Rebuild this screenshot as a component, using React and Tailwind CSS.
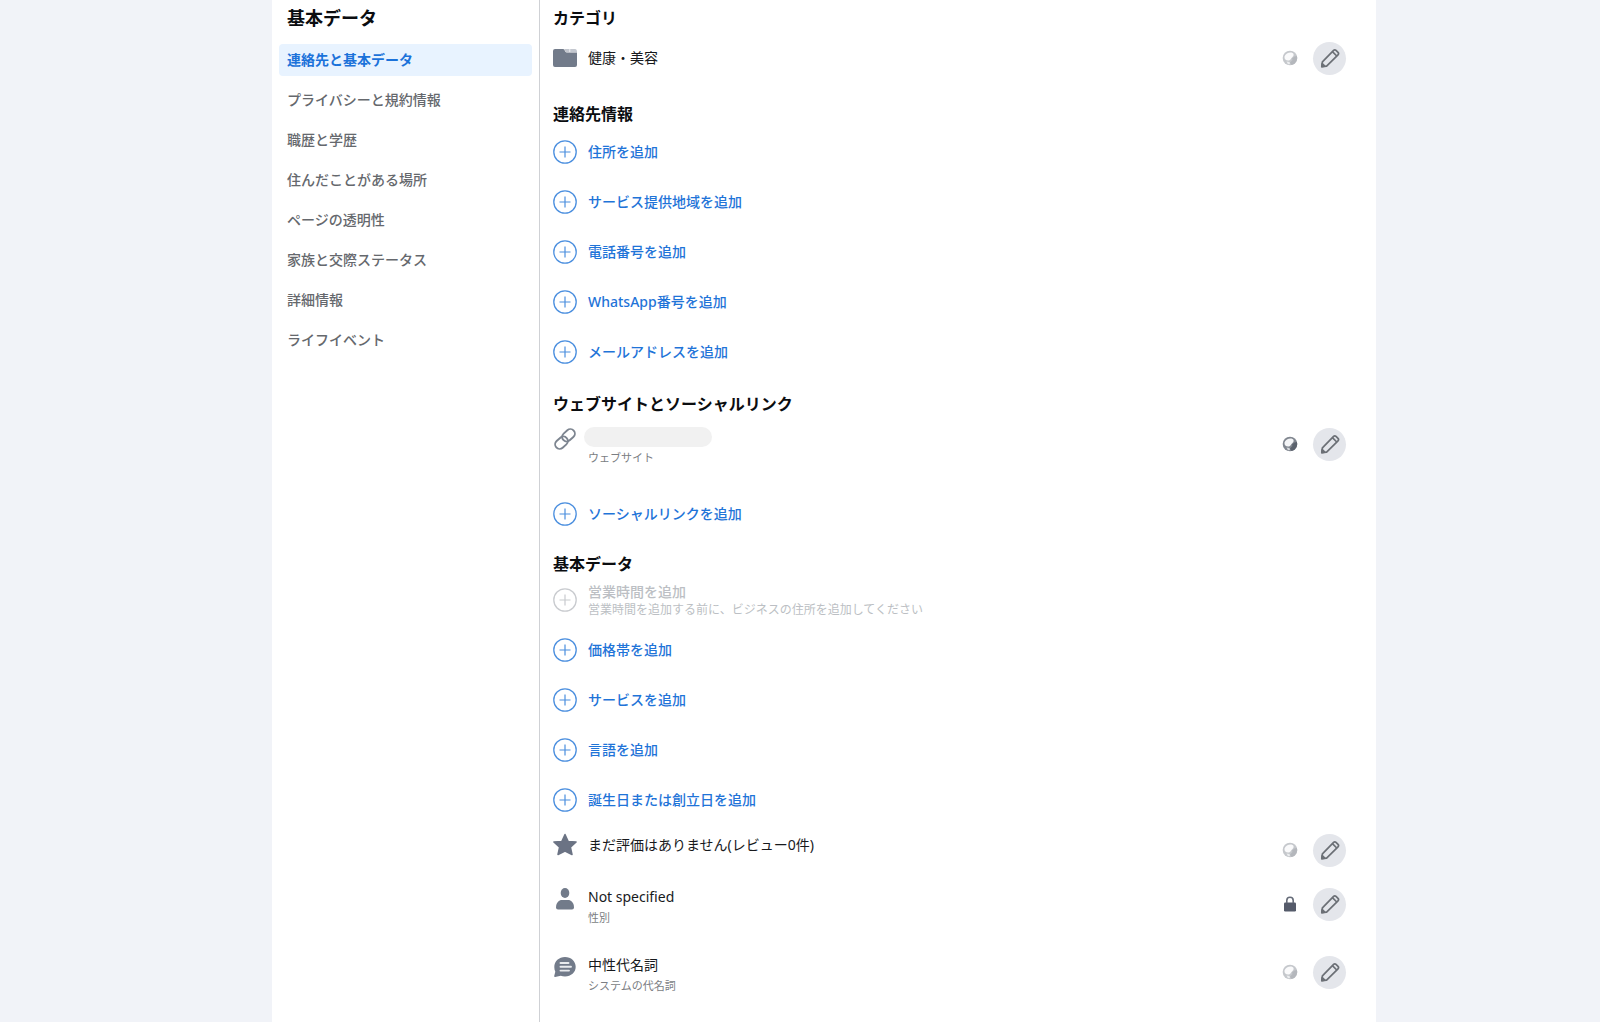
import React from 'react';

const menuItems = [
  '連絡先と基本データ',
  'プライバシーと規約情報',
  '職歴と学歴',
  '住んだことがある場所',
  'ページの透明性',
  '家族と交際ステータス',
  '詳細情報',
  'ライフイベント',
];

const contactItems = [
  '住所を追加',
  'サービス提供地域を追加',
  '電話番号を追加',
  'WhatsApp番号を追加',
  'メールアドレスを追加',
];

const basicItems = ['価格帯を追加', 'サービスを追加', '言語を追加', '誕生日または創立日を追加'];

/* Icons */
const PlusCircle = () => (
  <svg viewBox="0 0 24 24" className="h-6 w-6 shrink-0 opacity-80" fill="none" stroke="currentColor" aria-hidden="true">
    <circle cx="12" cy="12" r="11.2" strokeWidth="1.3" />
    <path d="M12 6.5v11M6.500 12h11" strokeWidth="1.2" />
  </svg>
);

const FolderIcon = () => (
  <svg viewBox="0 0 24 24" className="h-6 w-6 shrink-0" aria-hidden="true">
    <path d="M0 5Q0 3 2 3h8q1 0 1.500 1l.8 1.500q.5 1 1.500 1H24V19q0 2-2 2H2q-2 0-2-2z" fill="#727b8a" />
    <path d="M11 3h5.500v3h-3.700zM17.200 3H22q2 0 2 3h-6.800z" fill="#c3c7cf" />
  </svg>
);

const LinkIcon = () => (
  <svg viewBox="0 0 24 24" className="h-6 w-6 shrink-0" fill="none" stroke="#7d8590" strokeWidth="1.9" aria-hidden="true">
    <rect x="8.500" y="3.800" width="14" height="9" rx="4.500" transform="rotate(-42 15.500 8.300)" />
    <rect x="1.500" y="11.200" width="14" height="9" rx="4.500" transform="rotate(-42 8.500 15.700)" />
  </svg>
);

const StarIcon = () => (
  <svg viewBox="0 0 24 24" className="h-6 w-6 shrink-0" fill="#6b7384" stroke="#6b7384" strokeWidth="1.500" strokeLinejoin="round" aria-hidden="true">
    <path d="M12 1.500l3.100 6.900 8 .6-5.700 5.200 1.600 7.300-7-3.500-7 3.500 1.600-7.300L.9 9l8-.6z" />
  </svg>
);

const PersonIcon = () => (
  <svg viewBox="0 0 24 24" className="h-6 w-6 shrink-0" fill="#727b8a" aria-hidden="true">
    <ellipse cx="12" cy="6" rx="4.300" ry="5" />
    <path d="M3 20.500C3 15.500 6 13 9 13h6c3 0 6 2.500 6 7.500q0 2-2 2H5q-2 0-2-2z" />
  </svg>
);

const ChatIcon = () => (
  <svg viewBox="0 0 24 24" className="h-6 w-6 shrink-0" aria-hidden="true">
    <path d="M12 2c6 0 10.700 4.200 10.700 9.800S18 21.500 12 21.500c-1.600 0-3-.2-4.200-.7L2 22q-1 0-.8-1l1.100-4.300C1.600 15.300 1.300 13.700 1.300 12 1.300 6.200 6 2 12 2z" fill="#727b8a" />
    <path d="M7.500 8h8M7.500 11.800h10.500M7.500 15.600h8.500" stroke="#e9ebee" strokeWidth="1.900" strokeLinecap="round" />
  </svg>
);

const GlobeIcon = ({ muted }) => (
  <svg viewBox="0 0 16 16" className={muted ? 'h-4 w-4 opacity-45' : 'h-4 w-4'} role="img" aria-label="公開">
    <circle cx="8" cy="8" r="7.300" fill="#80868f" />
    <path d="M2.500 6.500C3.500 4 6 2.500 8.500 2.500c1.500 0 2.500.5 3 1.500.5 1.500-.5 2.500-1.500 3.500S8.500 10 7 10.500C4.500 11 2 9.500 2.500 6.500z" fill="#f4f5f7" />
    <path d="M14.900 6 12.500 6.500 10 8.500l.5 1.500L8 12.500l1.500 2.500A7.300 7.300 0 0 0 14.900 6z" fill="#5b626d" />
    <path d="M4.500 11.500 7.500 12l.5 2-2 .2z" fill="#d5d8dc" />
  </svg>
);

const LockIcon = () => (
  <svg viewBox="0 0 16 16" className="h-4 w-4" role="img" aria-label="自分のみ">
    <rect x="2" y="6.500" width="12" height="9" rx="1.200" fill="#555b6a" />
    <path d="M4.800 7V4.500a3.200 3.200 0 0 1 6.400 0V7" fill="none" stroke="#666c79" strokeWidth="1.600" />
  </svg>
);

const PencilIcon = () => (
  <svg viewBox="0 0 20 20" className="h-5 w-5" fill="none" stroke="#6c7076" strokeWidth="1.700" strokeLinejoin="round" aria-hidden="true">
    <path d="M1.800 18.600l.6-4.800L13.600 2.400q1.200-1.200 2.400 0l2 2q1.200 1.200 0 2.400L6.600 18.100z" />
    <path d="M12.400 3.600l4.400 4.400" />
    <path d="M1.800 18.600l.4-3 2.600 2.600z" fill="#6c7076" />
  </svg>
);

/* Building blocks */
const Heading = ({ children, className }) => (
  <h3 className={`text-base leading-[22px] font-bold text-[#0b0d10] ${className}`}>{children}</h3>
);

const AddRow = ({ label }) => (
  <button type="button" className="flex h-[50px] items-center gap-[11px] text-sm font-medium text-[#1f74d8]">
    <PlusCircle />
    <span>{label}</span>
  </button>
);

const InfoRow = ({ icon, title, subtitle, privacy, center, className = '' }) => (
  <div className={`flex h-[50px] items-center justify-between ${className}`}>
    <div className={center ? 'flex items-center gap-[11px]' : 'flex items-start gap-[11px] self-start pt-2'}>
      {icon}
      <div>
        <div className={subtitle ? 'text-sm leading-5 text-[#17191c]' : 'text-sm leading-6 text-[#17191c]'}>{title}</div>
        {subtitle && <div className="text-[11px] leading-[22px] text-[#7b7e83]">{subtitle}</div>}
      </div>
    </div>
    <div className="flex items-center gap-[15px]">
      {privacy}
      <button type="button" aria-label="編集" className="flex h-[33px] w-[33px] items-center justify-center rounded-full bg-[#e4e6eb]">
        <PencilIcon />
      </button>
    </div>
  </div>
);

const Sidebar = () => (
  <aside className="w-[268px] shrink-0 border-r border-[#cfd1d5] px-[7px] pt-1">
    <h2 className="mb-3 px-2 text-lg leading-7 font-bold text-[#0b0d10]">基本データ</h2>
    <nav className="flex flex-col gap-2">
      {menuItems.map((item, index) => (
        <a
          key={item}
          href="#"
          className={
            index === 0
              ? 'rounded-sm bg-[#e8f3ff] px-2 text-sm leading-8 font-bold text-[#1b72da]'
              : 'rounded-sm px-2 text-sm leading-8 font-medium text-[#65686d]'
          }
        >
          {item}
        </a>
      ))}
    </nav>
  </aside>
);

const App = () => {
  return (
    <div className="min-h-screen bg-[#f1f3f8] pr-[14%] pl-[17%] font-['Noto_Sans','Noto_Sans_CJK_JP',sans-serif]">
      <div className="flex min-h-screen bg-white">
        <Sidebar />

        <main className="flex min-w-0 flex-1 flex-col pt-[7px] pr-[30px] pb-5 pl-[13px]">
          {/* Category */}
          <Heading className="mb-1">カテゴリ</Heading>
          <InfoRow icon={<FolderIcon />} title="健康・美容" privacy={<GlobeIcon muted />} center />

          {/* Contact info */}
          <Heading className="mt-5 mb-0.5">連絡先情報</Heading>
          {contactItems.map((label) => (
            <AddRow key={label} label={label} />
          ))}

          {/* Website and social links */}
          <Heading className="mt-4 mb-1">ウェブサイトとソーシャルリンク</Heading>
          <InfoRow
            icon={<LinkIcon />}
            title={<div className="-ml-1 h-5 w-32 rounded-full bg-[#f1f1f1]"></div>}
            subtitle="ウェブサイト"
            privacy={<GlobeIcon />}
            className="mb-5"
          />
          <AddRow label="ソーシャルリンクを追加" />

          {/* Basic info */}
          <Heading className="mt-[14px]">基本データ</Heading>
          <button type="button" disabled className="flex h-[50px] items-center gap-[11px] text-left text-[#bcbfc4]">
            <PlusCircle />
            <span>
              <span className="block text-sm leading-5 font-medium">営業時間を追加</span>
              <span className="block text-xs leading-4">営業時間を追加する前に、ビジネスの住所を追加してください</span>
            </span>
          </button>
          {basicItems.map((label) => (
            <AddRow key={label} label={label} />
          ))}

          <InfoRow icon={<StarIcon />} title="まだ評価はありません(レビュー0件)" privacy={<GlobeIcon muted />} />
          <InfoRow icon={<PersonIcon />} title="Not specified" subtitle="性別" privacy={<LockIcon />} className="mt-1" />
          <InfoRow
            icon={<ChatIcon />}
            title="中性代名詞"
            subtitle="システムの代名詞"
            privacy={<GlobeIcon muted />}
            className="mt-[18px]"
          />
        </main>
      </div>
    </div>
  );
};

export default App;
